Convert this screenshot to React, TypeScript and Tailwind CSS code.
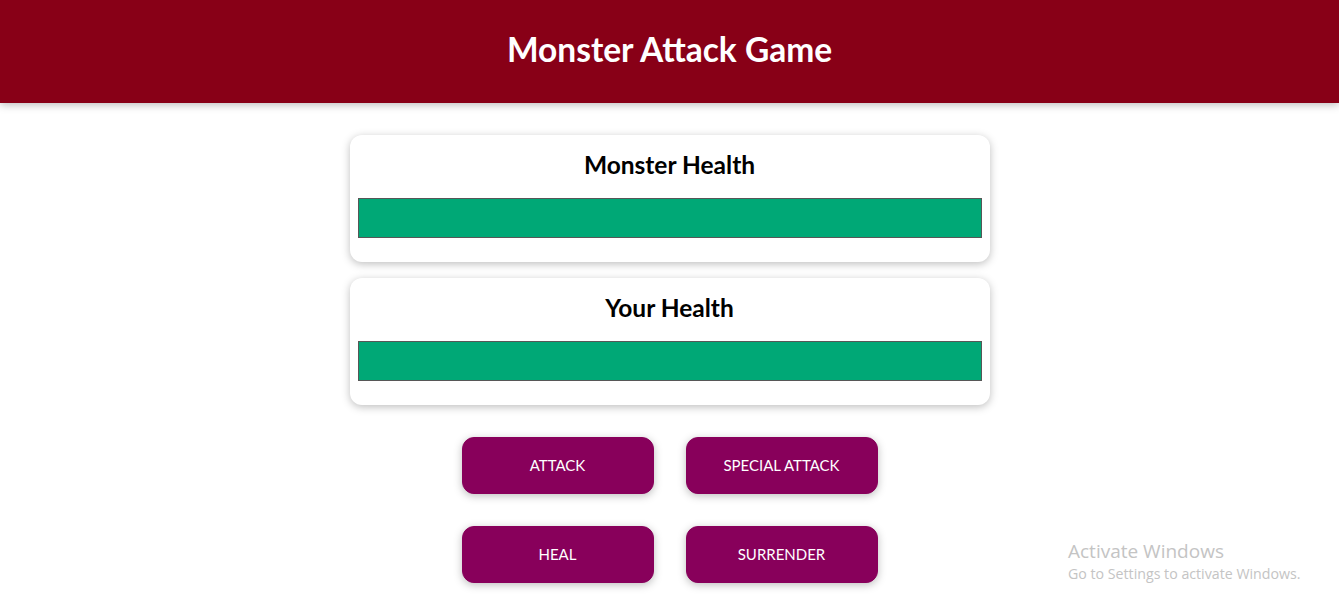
import React, { useState } from "react";

const shadow = "shadow-[0_2px_8px_rgba(0,0,0,0.26)]";

function HealthCard({ title, value }: { title: string; value: number }) {
  return (
    <section
      className={`mx-auto w-[640px] rounded-xl bg-white px-2 pt-[8px] pb-2 text-center ${shadow}`}
    >
      <h2 className="mt-[5px] text-[24.5px] leading-[34px] font-bold text-black">
        {title}
      </h2>
      <div className="mt-[16px] mb-4 h-10 w-full border border-[#575757] bg-[#fde5e5]">
        <div className="h-full bg-[#00a876]" style={{ width: value + "%" }} />
      </div>
    </section>
  );
}

function ActionButton({ label }: { label: string }) {
  return (
    <button
      className={`h-[57px] w-48 cursor-pointer rounded-xl border border-[#88005b] bg-[#88005b] text-[15px] text-white ${shadow}`}
    >
      {label}
    </button>
  );
}

export default function App() {
  const [monsterHealth] = useState(100);
  const [playerHealth] = useState(100);

  return (
    <div className="relative min-h-[607px] bg-white font-['Lato',sans-serif]">
      <header className={`flex h-[103px] items-center justify-center bg-[#880017] pb-[4px] ${shadow}`}>
        <h1 className="text-[33.5px] font-bold text-white">Monster Attack Game</h1>
      </header>

      <div className="mt-8 flex flex-col gap-4">
        <HealthCard title="Monster Health" value={monsterHealth} />
        <HealthCard title="Your Health" value={playerHealth} />
      </div>

      <div className="mt-8 flex flex-col items-center gap-8">
        <div className="flex gap-8">
          <ActionButton label="ATTACK" />
          <ActionButton label="SPECIAL ATTACK" />
        </div>
        <div className="flex gap-8">
          <ActionButton label="HEAL" />
          <ActionButton label="SURRENDER" />
        </div>
      </div>

      {/* windows watermark */}
      <div className="pointer-events-none absolute top-[538px] left-[1068px] font-['Open_Sans',sans-serif] text-[#c4c4c4]">
        <div className="text-[19px] leading-[26px]">Activate Windows</div>
        <div className="text-[14.2px] leading-[20px]">Go to Settings to activate Windows.</div>
      </div>
    </div>
  );
}
